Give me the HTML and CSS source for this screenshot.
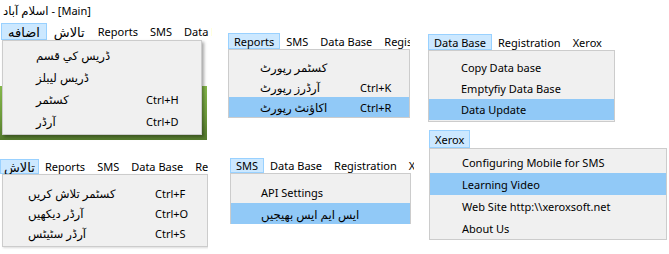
FILE: index.html
```html
<!DOCTYPE html>
<html lang="ur">
<head>
<meta charset="utf-8">
<title>Menus</title>
<link rel="stylesheet" href="styles.css">
</head>
<body>
<main class="canvas">

  <section class="panel p1">
    <div class="backdrop"></div>
    <div class="title"><span class="ur">اسلام آباد</span> - [Main]</div>
    <nav class="menubar">
      <span class="mi active ur">اضافه</span>
      <span class="mi ur">تالاش</span>
      <span class="mi">Reports</span>
      <span class="mi">SMS</span>
      <span class="mi">Data Base</span>
    </nav>
    <div class="dropdown">
      <div class="row"><span class="label ur">ڈریس کي قسم</span><span class="key"></span></div>
      <div class="row"><span class="label ur">ڈریس لیبلز</span><span class="key"></span></div>
      <div class="row"><span class="label ur">کسٹمر</span><span class="key">Ctrl+H</span></div>
      <div class="row"><span class="label ur">آرڈر</span><span class="key">Ctrl+D</span></div>
    </div>
  </section>

  <section class="panel p2">
    <nav class="menubar">
      <span class="mi active">Reports</span>
      <span class="mi">SMS</span>
      <span class="mi">Data Base</span>
      <span class="mi">Registration</span>
    </nav>
    <div class="dropdown">
      <div class="row"><span class="label ur">کسٹمر رپورٹ</span><span class="key"></span></div>
      <div class="row"><span class="label ur">آرڈرز رپورٹ</span><span class="key">Ctrl+K</span></div>
      <div class="row hl"><span class="label ur">اکاؤنٹ رپورٹ</span><span class="key">Ctrl+R</span></div>
    </div>
  </section>

  <section class="panel p3">
    <nav class="menubar">
      <span class="mi active">Data Base</span>
      <span class="mi">Registration</span>
      <span class="mi">Xerox</span>
    </nav>
    <div class="dropdown">
      <div class="row"><span class="label">Copy Data base</span></div>
      <div class="row"><span class="label">Emptyfiy Data Base</span></div>
      <div class="row hl"><span class="label">Data Update</span></div>
    </div>
  </section>

  <section class="panel p4">
    <nav class="menubar">
      <span class="mi active ur">تالاش</span>
      <span class="mi">Reports</span>
      <span class="mi">SMS</span>
      <span class="mi">Data Base</span>
      <span class="mi">Registration</span>
    </nav>
    <div class="dropdown">
      <div class="row"><span class="label ur">کسٹمر تلاش کریں</span><span class="key">Ctrl+F</span></div>
      <div class="row"><span class="label ur">آرڈر دیکھیں</span><span class="key">Ctrl+O</span></div>
      <div class="row"><span class="label ur">آرڈر سٹیٹس</span><span class="key">Ctrl+S</span></div>
    </div>
  </section>

  <section class="panel p5">
    <nav class="menubar">
      <span class="mi active">SMS</span>
      <span class="mi">Data Base</span>
      <span class="mi">Registration</span>
      <span class="mi">Xerox</span>
    </nav>
    <div class="dropdown">
      <div class="row"><span class="label">API Settings</span></div>
      <div class="row hl"><span class="label ur">ایس ایم ایس بھیجیں</span></div>
    </div>
  </section>

  <section class="panel p6">
    <nav class="menubar">
      <span class="mi active">Xerox</span>
    </nav>
    <div class="dropdown">
      <div class="row"><span class="label">Configuring Mobile for SMS</span></div>
      <div class="row hl"><span class="label">Learning Video</span></div>
      <div class="row"><span class="label">Web Site http:\\xeroxsoft.net</span></div>
      <div class="row"><span class="label">About Us</span></div>
    </div>
  </section>

</main>
</body>
</html>
```

FILE: styles.css
```css
* { box-sizing: border-box; }

html, body {
  margin: 0;
  padding: 0;
  background: #ffffff;
}

body {
  font-family: "Noto Sans", "Open Sans", "DejaVu Sans", sans-serif;
  font-size: 11px;
  color: #000;
}

.ur { font-size: 11.7px; }
.mi.ur { font-size: 13px; }

.canvas {
  position: relative;
  width: 669px;
  height: 254px;
  overflow: hidden;
}

/* each screenshot tile sits at its own spot of the collage */
.panel {
  position: absolute;
  overflow: hidden;
  background: #fff;
}

.p1 { left: 0;     top: 0;     width: 212px; height: 142px; }
.p2 { left: 228px; top: 33px;  width: 182px; height: 88px; }
.p3 { left: 428px; top: 34px;  width: 187px; height: 90px; }
.p4 { left: 0;     top: 159px; width: 208px; height: 92px; }
.p5 { left: 230px; top: 158px; width: 184px; height: 66px; }
.p6 { left: 429px; top: 130px; width: 240px; height: 114px; }

.backdrop {
  position: absolute;
  left: 0;
  top: 86px;
  width: 207px;
  height: 54px;
  background: linear-gradient(180deg, #86b94c 0%, #6f9d3c 55%, #557a2e 100%);
}

.title {
  height: 22px;
  line-height: 21px;
  padding-left: 3px;
  white-space: nowrap;
}

.menubar {
  display: flex;
  white-space: nowrap;
  height: 16px;
  background: #fff;
}
.p1 .menubar { height: 17px; margin-top: 1px; padding-left: 1px; }
.p4 .menubar, .p5 .menubar { height: 15px; }
.p6 .menubar { height: 18px; }

.mi {
  flex: none;
  display: flex;
  align-items: center;
  padding: 0 5px;
  border: 1px solid transparent;
}
.mi.ur { padding: 0 6px; }
.p4 .mi.ur { padding: 0 3px; }
.mi.active {
  background: #cce8ff;
  border-color: #99d1ff;
}

.dropdown {
  position: relative;
  background: #f0f0f0;
  border: 1px solid #cccccc;
  white-space: nowrap;
}

.row {
  display: flex;
  align-items: center;
  height: var(--row-h);
  padding-left: var(--indent);
}
.row.hl { background: #91c9f7; }

.label {
  flex: none;
  width: var(--label-w);
}
.key { flex: none; }

.p1 .dropdown {
  margin-left: 2px;
  width: 200px;
  padding: 3px 0 2px;
  box-shadow: 2px 2px 3px rgba(0, 0, 0, 0.35);
  --row-h: 22px; --indent: 33px; --label-w: 110px;
}
.p2 .dropdown {
  width: 182px;
  padding: 7px 0 0;
  --row-h: 20px; --indent: 31px; --label-w: 100px;
}
.p3 .dropdown {
  width: 187px;
  padding: 6px 0 1px;
  --row-h: 21px; --indent: 32px; --label-w: 140px;
}
.p4 .dropdown {
  margin-left: 2px;
  width: 206px;
  padding: 8px 0 3px;
  box-shadow: 1px 1px 2px rgba(0, 0, 0, 0.15);
  --row-h: 20px; --indent: 25px; --label-w: 127px;
}
.p5 .dropdown {
  width: 181px;
  padding: 8px 0 0;
  --row-h: 21px; --indent: 30px; --label-w: 140px;
}
.p6 .dropdown {
  width: 238px;
  padding: 2px 0 0;
  --row-h: 22px; --indent: 32px; --label-w: 200px;
}
```
